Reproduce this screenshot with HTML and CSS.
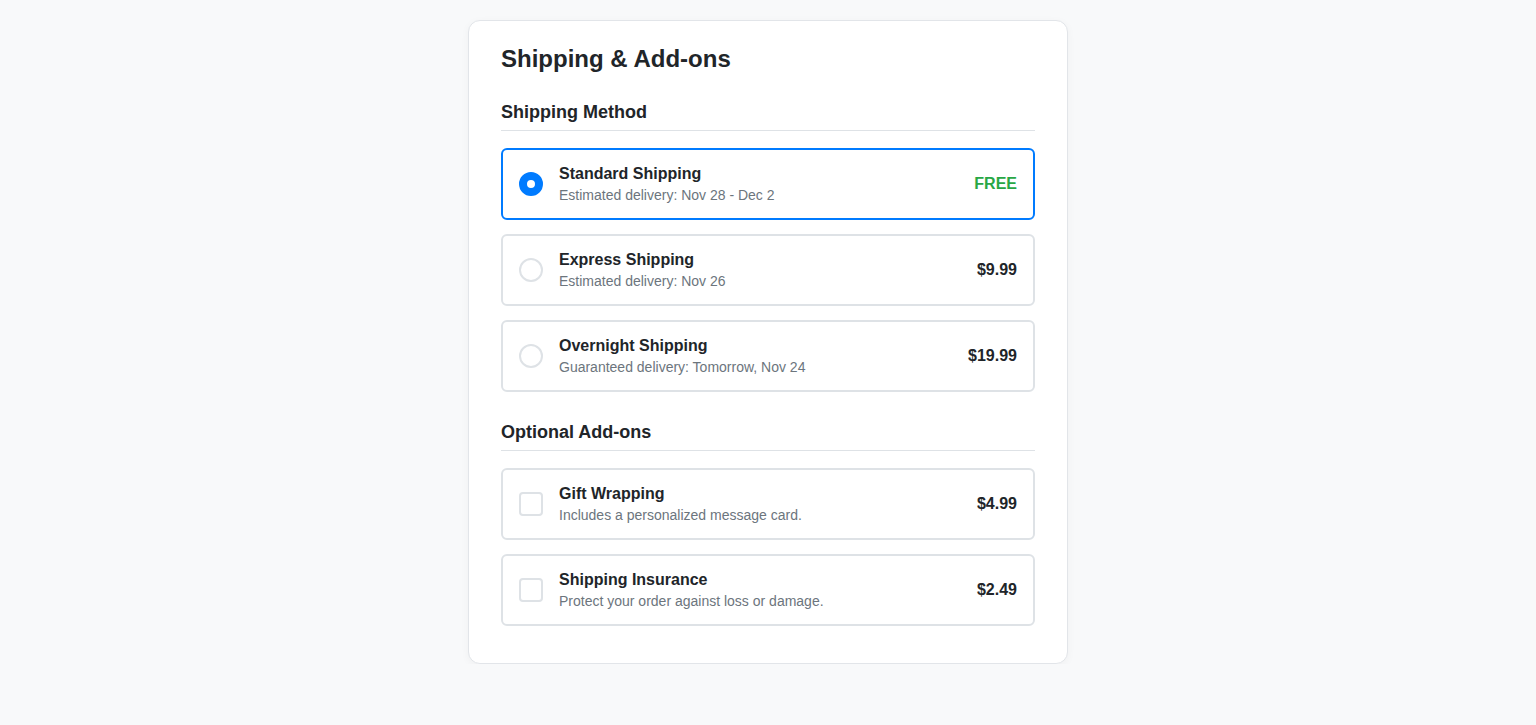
FILE: index.html
```html
<!DOCTYPE html>
<html lang="en">
<head>
<meta charset="utf-8">
<title>Shipping & Add-ons</title>
<link rel="stylesheet" href="styles.css">
</head>
<body>
<main class="card">
  <h2 class="card-title">Shipping &amp; Add-ons</h2>

  <section class="group">
    <h3 class="group-title">Shipping Method</h3>
    <div class="options">
      <label class="option selected">
        <span class="radio checked"></span>
        <span class="info">
          <span class="name">Standard Shipping</span>
          <span class="desc">Estimated delivery: Nov 28 - Dec 2</span>
        </span>
        <span class="price free">FREE</span>
      </label>
      <label class="option">
        <span class="radio"></span>
        <span class="info">
          <span class="name">Express Shipping</span>
          <span class="desc">Estimated delivery: Nov 26</span>
        </span>
        <span class="price">$9.99</span>
      </label>
      <label class="option">
        <span class="radio"></span>
        <span class="info">
          <span class="name">Overnight Shipping</span>
          <span class="desc">Guaranteed delivery: Tomorrow, Nov 24</span>
        </span>
        <span class="price">$19.99</span>
      </label>
    </div>
  </section>

  <section class="group group-addons">
    <h3 class="group-title">Optional Add-ons</h3>
    <div class="options">
      <label class="option">
        <span class="checkbox"></span>
        <span class="info">
          <span class="name">Gift Wrapping</span>
          <span class="desc">Includes a personalized message card.</span>
        </span>
        <span class="price">$4.99</span>
      </label>
      <label class="option">
        <span class="checkbox"></span>
        <span class="info">
          <span class="name">Shipping Insurance</span>
          <span class="desc">Protect your order against loss or damage.</span>
        </span>
        <span class="price">$2.49</span>
      </label>
    </div>
  </section>
</main>
</body>
</html>
```

FILE: styles.css
```css
* {
  box-sizing: border-box;
}

html, body {
  margin: 0;
  padding: 0;
}

body {
  background: #f8f9fa;
  font-family: "Liberation Sans", Arial, Helvetica, sans-serif;
  color: #212529;
  padding-top: 20px;
}

.card {
  width: 600px;
  margin: 0 auto;
  background: #ffffff;
  border: 1px solid #e2e5e9;
  border-radius: 12px;
  box-shadow: 0 2px 8px rgba(0, 0, 0, 0.04);
  padding: 24px 32px 37px;
}

.card-title {
  margin: 0;
  font-size: 24px;
  line-height: 28px;
  font-weight: 700;
  color: #212529;
}

.group {
  margin-top: 30px;
}

.group-addons {
  margin-top: 31px;
}

.group-title {
  margin: 0 0 17px;
  font-size: 18px;
  line-height: 18px;
  font-weight: 700;
  padding-bottom: 9px;
  border-bottom: 1px solid #dee2e6;
  color: #212529;
}

.options {
  display: flex;
  flex-direction: column;
  gap: 14px;
}

.option {
  display: flex;
  align-items: center;
  gap: 16px;
  height: 72px;
  padding: 0 16px;
  border: 2px solid #dee2e6;
  border-radius: 6px;
  background: #ffffff;
  cursor: pointer;
}

.option.selected {
  border-color: #007bff;
}

.radio {
  flex: 0 0 auto;
  width: 24px;
  height: 24px;
  border-radius: 50%;
  border: 2px solid #dee2e6;
  background: #ffffff;
}

.radio.checked {
  border: 8px solid #007bff;
}

.checkbox {
  flex: 0 0 auto;
  width: 24px;
  height: 24px;
  border-radius: 4px;
  border: 2px solid #dee2e6;
  background: #ffffff;
}

.info {
  flex: 1 1 auto;
  display: flex;
  flex-direction: column;
}

.name {
  font-size: 16px;
  line-height: 18px;
  font-weight: 700;
  color: #212529;
}

.desc {
  margin-top: 4px;
  font-size: 14px;
  line-height: 16px;
  color: #6c757d;
}

.price {
  flex: 0 0 auto;
  font-size: 16px;
  font-weight: 700;
  color: #212529;
}

.price.free {
  color: #28a745;
}
```
